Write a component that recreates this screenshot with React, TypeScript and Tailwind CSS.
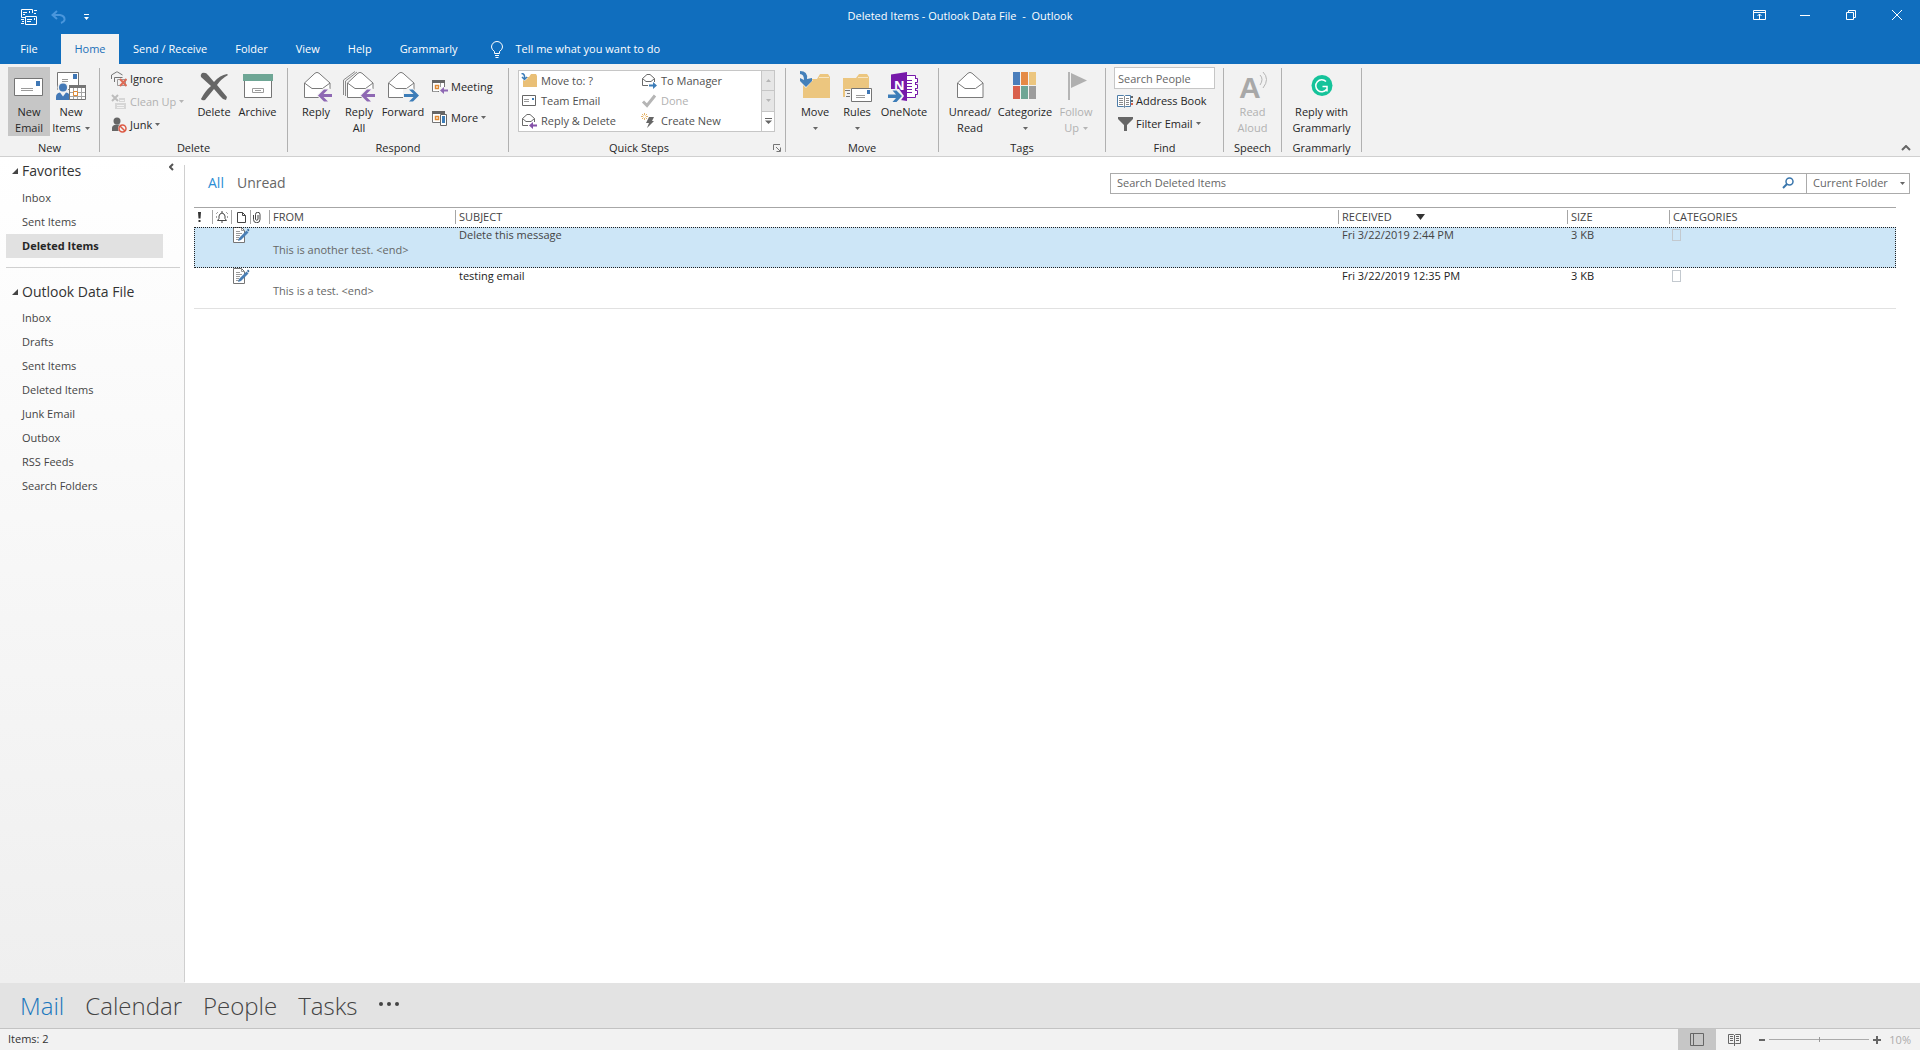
import React from 'react';

interface IconProps {
  className?: string;
}

interface Message {
  from: string;
  subject: string;
  preview: string;
  received: string;
  size: string;
  selected?: boolean;
}

const messages: Message[] = [
  {
    from: '',
    subject: 'Delete this message',
    preview: 'This is another test. <end>',
    received: 'Fri 3/22/2019 2:44 PM',
    size: '3 KB',
    selected: true,
  },
  {
    from: '',
    subject: 'testing email',
    preview: 'This is a test. <end>',
    received: 'Fri 3/22/2019 12:35 PM',
    size: '3 KB',
  },
];

const favorites = ['Inbox', 'Sent Items', 'Deleted Items'];
const folders = ['Inbox', 'Drafts', 'Sent Items', 'Deleted Items', 'Junk Email', 'Outbox', 'RSS Feeds', 'Search Folders'];
const tabs = ['Send / Receive', 'Folder', 'View', 'Help', 'Grammarly'];

/* ---------- Icons ---------- */

const Icon: React.FC<{ size: 16 | 32; children: React.ReactNode }> = ({ size, children }) => (
  <svg
    viewBox={size === 32 ? '0 0 32 32' : '0 0 16 16'}
    className={size === 32 ? 'w-8 h-8 shrink-0' : 'w-4 h-4 shrink-0'}
    fill="none"
    aria-hidden="true"
  >
    {children}
  </svg>
);

const OpenEnvelope = () => (
  <>
    <path d="M4.500 12 15 2.200q2-1.600 4 0L30 12v14.500H4.500z" fill="#fff" stroke="#7a7a7a" />
    <path d="M4.500 12 12 17.500h10.500L30 12" stroke="#7a7a7a" />
  </>
);

const SmallEnvelope = () => (
  <>
    <path d="M1.500 5.500 6 1.500h3l4.500 4V12.500h-12z" fill="#fff" stroke="#6a6a6a" />
    <path d="M1.500 5.500 5 8.500h5l3.500-3" stroke="#6a6a6a" />
  </>
);

const ArrowLeft = () => (
  <>
    <path d="M22 18h12v14H22z" fill="#f2f2f2" />
    <path d="M18 24.500 24 18.500h4l-4.500 4.500H33v3h-9.500L28 30.500h-4z" fill="#8e68b3" stroke="#f2f2f2" strokeWidth="2" paintOrder="stroke" />
  </>
);

const NewEmailIcon = () => (
  <Icon size={32}>
    <path d="M1.500 7.500h28v17h-28z" fill="#fff" stroke="#757575" />
    <path d="M23 10h4v5h-4z" fill="#3f77b5" />
    <path d="M8 17.500h12M8 19.500h12" stroke="#9b9b9b" />
  </Icon>
);

const NewItemsIcon = () => (
  <Icon size={32}>
    <path d="M2.500 1.500h21v17h-21z" fill="#fff" stroke="#757575" />
    <path d="M18 3h4v5h-4z" fill="#3f77b5" />
    <path d="M7 8.500h6M7 10.500h6" stroke="#9b9b9b" />
    <circle cx="8" cy="16.500" r="5.500" fill="#f2f2f2" />
    <circle cx="8" cy="16.500" r="4" fill="#4379b7" />
    <path d="M1 29v-3q0-4 4-4.500l3 4 3-4q4 .5 4 4.500v3z" fill="#4379b7" />
    <path d="M14.500 14.500h16v14h-16z" fill="#fff" stroke="#757575" />
    <path d="M14 14h17v3H14z" fill="#757575" />
    <path d="M18.500 17v11M26.500 17v11M15 21.500h15M15 25.500h15M22.500 17v11" stroke="#a5a5a5" />
    <path d="M18.500 20.500h4v4h-4z" fill="#fff" stroke="#e08a34" />
  </Icon>
);

const DeleteIcon = () => (
  <Icon size={32}>
    <path d="M4 2q4-1 6 2l6 7q6-7 13-8l1 1q-7 4-11 10l10 12-1 3q-4-1-6-4l-6-7-9 11q-3 1-4-1 4-8 10-13L3 6q-1-2 1-4z" fill="#666" />
  </Icon>
);

const ArchiveIcon = () => (
  <Icon size={32}>
    <path d="M2.500 9.500h27v17h-27z" fill="#fff" stroke="#757575" />
    <path d="M1 3h30v7H1z" fill="#6ea695" />
    <path d="M10.500 17.500h11v4h-11z" stroke="#9b9b9b" />
    <path d="M13 19.500h6" stroke="#9b9b9b" />
  </Icon>
);

const ReplyIcon = () => (
  <Icon size={32}>
    <OpenEnvelope />
    <ArrowLeft />
  </Icon>
);

const ReplyAllIcon = () => (
  <Icon size={32}>
    <path d="M.5 24V9L12 .5M2.500 25V10L14 1" stroke="#8a8a8a" />
    <OpenEnvelope />
    <ArrowLeft />
  </Icon>
);

const ForwardIcon = () => (
  <Icon size={32}>
    <g transform="translate(-3 0)">
      <OpenEnvelope />
    </g>
    <path d="M16 18h10v14H16z" fill="#f2f2f2" />
    <path d="M32 24.500 26 18.500h-4l4.500 4.500H17v3h9.500L22 30.500h4z" fill="#3d7db8" stroke="#f2f2f2" strokeWidth="2" paintOrder="stroke" />
  </Icon>
);

const MoveIcon = () => (
  <Icon size={32}>
    <path d="M4 8h14l3-5h8l2 3v21H4z" fill="#ecc67f" />
    <path d="M20 6.500h10" stroke="#f7e6c4" />
    <path d="M0 0h9v9h5L7 17 0 10z" fill="#f2f2f2" />
    <path d="M1 0q8 0 7 8l5-1v3l-6 6-6-6V7l4 2q0-6-4-6z" fill="#4480ba" />
  </Icon>
);

const RulesIcon = () => (
  <Icon size={32}>
    <path d="M2 7h13l3-4h8l2 3v20H2z" fill="#ecc67f" />
    <path d="M17 6.500h10" stroke="#f7e6c4" />
    <path d="M4 18h8v9H4z" fill="#f2f2f2" />
    <path d="M4 19.500h5M6 22.500h3M5 25.500h4" stroke="#757575" />
    <path d="M10.500 17.500h20v13h-20z" fill="#fff" stroke="#757575" />
    <path d="M26 19h3v4h-3z" fill="#3f77b5" />
    <path d="M15 24.500h9M15 26.500h9" stroke="#9b9b9b" />
  </Icon>
);

const OneNoteIcon = () => (
  <Icon size={32}>
    <path d="M17 4.500h10.500v22H17z" fill="#fff" stroke="#7719aa" />
    <path d="M27 7.500h2.500v4H27M27 13.500h2.500v4H27M27 19.500h2.500v4H27" fill="#fff" stroke="#7719aa" />
    <path d="M19 9.500h5M19 12.500h5M19 15.500h5M19 18.500h5M19 21.500h5" stroke="#7719aa" />
    <path d="M3 3.500 19 1v29L3 27.500z" fill="#7719aa" />
    <text x="6" y="19" fill="#fff" fontSize="13" fontWeight="700" fontFamily="Open Sans, sans-serif">N</text>
    <path d="M-1 18h12l5 7-5 7H-1z" fill="#f2f2f2" />
    <path d="M0 23.500h8l-3.500-4h4L14 25l-5.500 6h-4l3.500-4H0z" fill="#3d7db8" />
  </Icon>
);

const UnreadIcon = () => (
  <Icon size={32}>
    <g transform="translate(-1 0)">
      <OpenEnvelope />
    </g>
  </Icon>
);

const CategorizeIcon = () => (
  <Icon size={32}>
    <path d="M4 1h7v13H4z" fill="#4a7ebb" />
    <path d="M12 1h7v13h-7z" fill="#e58a45" />
    <path d="M20 1h7v13h-7z" fill="#ecc67f" />
    <path d="M4 15h7v13H4z" fill="#d9604c" />
    <path d="M12 15h7v13h-7z" fill="#6ea695" />
    <path d="M20 15h7v13h-7z" fill="#9c9c9c" />
  </Icon>
);

const FlagIcon = () => (
  <Icon size={32}>
    <path d="M8 1h2v28H8z" fill="#b5b5b5" />
    <path d="M11 2 27 9.500 11 17z" fill="#b0b0b0" />
  </Icon>
);

const ReadAloudIcon = () => (
  <Icon size={32}>
    <text x="2" y="27" fill="#a8a8a8" fontSize="30" fontWeight="700" fontFamily="Liberation Sans, sans-serif">A</text>
    <path d="M23 4q4 4 0 10M26 1q7 7 0 16" stroke="#b5b5b5" />
  </Icon>
);

const GrammarlyIcon = () => (
  <Icon size={32}>
    <circle cx="16" cy="14.500" r="10.500" fill="#15c39a" />
    <path d="M20 10.500A6 6 0 1 0 20.500 18.500M16.500 15.500h4.500v5" stroke="#fff" strokeWidth="1.500" />
  </Icon>
);

const IgnoreIcon = () => (
  <Icon size={16}>
    <path d="M.5 8V4l5-3h1l5 3M3.500 11V6.500h8M6.500 14V9" stroke="#757575" />
    <path d="M6.500 8.500h8v6h-8z" fill="#f2f2f2" stroke="#9b9b9b" />
    <path d="m9 8 6.500 7M15.500 8 9 15" stroke="#dd6a55" strokeWidth="2" />
  </Icon>
);

const CleanUpIcon = () => (
  <Icon size={16}>
    <path d="m1 1 6 6M7 1 1 7" stroke="#bdbdbd" strokeWidth="2" />
    <path d="M8 4h6v4H8zM4 9h11v6H4z" fill="#d6d6d6" />
    <path d="M6 11.500h7M6 13.500h7M9 6.500h4" stroke="#f2f2f2" />
  </Icon>
);

const JunkIcon = () => (
  <Icon size={16}>
    <circle cx="6" cy="4" r="3.500" fill="#666" />
    <path d="M1 14v-3q0-3 4-3.500h3q2 0 3 2L8 14z" fill="#666" />
    <circle cx="11.500" cy="11.500" r="4.500" fill="#f2f2f2" />
    <circle cx="11.500" cy="11.500" r="3.500" stroke="#dd5a45" strokeWidth="1.500" />
    <path d="m9 9 5 5" stroke="#dd5a45" strokeWidth="1.500" />
  </Icon>
);

const MeetingIcon = () => (
  <Icon size={16}>
    <path d="M.5 1.500h12v11H.5z" fill="#fff" stroke="#757575" />
    <path d="M0 1h13v3H0z" fill="#666" />
    <path d="M3.500 6.500h3v3h-3z" stroke="#e08a34" strokeWidth="1.500" />
    <path d="M8.500 4v4M1 12.500h5" stroke="#9b9b9b" />
    <path d="M7 8h9v7H7z" fill="#f2f2f2" />
    <path d="M8 11.500 12 8v2.500h4v2h-4V15z" fill="#8e68b3" />
  </Icon>
);

const MoreIcon = () => (
  <Icon size={16}>
    <path d="M.5 1.500h12v11H.5z" fill="#fff" stroke="#757575" />
    <path d="M0 1h13v3H0z" fill="#666" />
    <path d="M3.500 6.500h3v3h-3z" stroke="#e08a34" strokeWidth="1.500" />
    <path d="M8.500 4.500h6v11h-6z" fill="#fff" stroke="#666" />
    <path d="M10 6h3v7h-3z" fill="#3d7db8" />
  </Icon>
);

const FolderMoveIcon = () => (
  <Icon size={16}>
    <path d="M2 4h6l2-3h5l1 2v11H2z" fill="#e9bf76" />
    <path d="M0 0h5v5h2L3.500 8 0 5z" fill="#fff" />
    <path d="M.5.500q3.500 0 3 5M1 4l2.500 2.500L6 4" stroke="#3d7db8" strokeWidth="1.500" />
  </Icon>
);

const TeamEmailIcon = () => (
  <Icon size={16}>
    <path d="M1.500 2.500h13v10h-13z" fill="#fff" stroke="#666" />
    <path d="M3 6.500h5M3 8.500h5" stroke="#9b9b9b" />
    <path d="M11 5h2v2h-2z" fill="#3d7db8" />
  </Icon>
);

const ReplyDeleteIcon = () => (
  <Icon size={16}>
    <SmallEnvelope />
    <path d="M7 9h9v7H7z" fill="#fff" />
    <path d="M8 12.500 12 9v2.500h4v2h-4V16z" fill="#8451a8" />
  </Icon>
);

const ToManagerIcon = () => (
  <Icon size={16}>
    <SmallEnvelope />
    <path d="M7 9h9v7H7z" fill="#fff" />
    <path d="M16 12.500 12 9v2.500H8v2h4V16z" fill="#3d7db8" />
  </Icon>
);

const DoneIcon = () => (
  <Icon size={16}>
    <path d="m2 8.500 4 4L14 2.500" stroke="#b5b5b5" strokeWidth="3" />
  </Icon>
);

const CreateNewIcon = () => (
  <Icon size={16}>
    <path d="M3.500 0v7M0 3.500h7M1 1l5 5M6 1 1 6" stroke="#e6b368" />
    <circle cx="3.500" cy="3.500" r="1.500" fill="#fff" />
    <path d="M8 4h5l-2 4h2l-7 7 2-5H5z" fill="#666" />
  </Icon>
);

const AddressBookIcon = () => (
  <Icon size={16}>
    <path d="M.5 2.500h6l1 1 1-1h5v11h-5l-1 1-1-1h-6z" fill="#fff" stroke="#4d7da8" />
    <path d="M7.500 3v11M2 5.500h4M2 7.500h4M2 9.500h4M2 11.500h4M9 5.500h3M9 7.500h3M9 9.500h3M9 11.500h3" stroke="#8a8a8a" />
    <path d="M14 3h2v2h-2zM14 7h2v2h-2z" fill="#666" />
    <path d="M14 10h2v2h-2z" fill="#d9604c" />
  </Icon>
);

const FilterIcon = () => (
  <Icon size={16}>
    <path d="M1 1h15v2L10 9v6H7V9L1 3z" fill="#666" />
  </Icon>
);

const NoteIcon: React.FC<IconProps> = ({ className }) => (
  <svg viewBox="0 0 17 16" className={className} fill="none" aria-hidden="true">
    <path d="M.5.500h8l3 3v12H.5z" fill="#fff" stroke="#757575" />
    <path d="M8.500.500v3h3M3 4.500h4M3 6.500h6M3 8.500h4M3 10.500h3M3 12.500h3" stroke="#9b9b9b" />
    <path d="m6 11 7.500-7.500 2 2L8 13l-3 1z" fill="#4a7fb5" />
    <path d="m14 3 1-1.500 1.500 1.500-1 1.500z" fill="#3a6a9c" />
  </svg>
);

const Caret: React.FC<{ disabled?: boolean }> = ({ disabled }) => (
  <svg viewBox="0 0 5 3" className="w-[5px] h-[3px] shrink-0" aria-hidden="true">
    <path d="M0 0h5L2.500 3z" fill={disabled ? '#b5b5b5' : '#666'} />
  </svg>
);

/* ---------- Ribbon ---------- */

interface GroupProps {
  label: string;
  className?: string;
  launcher?: boolean;
  children: React.ReactNode;
}

const RibbonGroup: React.FC<GroupProps> = ({ label, className = '', launcher, children }) => (
  <section aria-label={label} className="flex shrink-0">
    <div className="flex flex-col pt-[3px]">
      <div className={`flex flex-1 items-start ${className}`}>{children}</div>
      <div className="flex h-4 items-center">
        <span className="flex-1 text-center leading-4">{label}</span>
        {launcher && (
          <button aria-label="Manage Quick Steps" className="w-4 h-3 flex items-center justify-center">
            <svg viewBox="0 0 8 8" className="w-2 h-2" fill="none">
              <path d="M.5 6V.5H7M3 3l4 4M7.500 3.500v4h-4" stroke="#757575" />
            </svg>
          </button>
        )}
      </div>
    </div>
    <div className="w-px h-[84px] mt-1 bg-[#b1b1b1]" />
  </section>
);

interface BigButtonProps {
  icon: React.ReactNode;
  lines: string[];
  className: string;
  caret?: boolean;
  active?: boolean;
  disabled?: boolean;
}

const BigButton: React.FC<BigButtonProps> = ({ icon, lines, className, caret, active, disabled }) => (
  <button
    disabled={disabled}
    className={`flex flex-col items-center h-[69px] pt-0.5 leading-4 whitespace-nowrap ${className} ${active ? 'bg-[#c6c6c6]' : 'hover:bg-[#d5d5d5]'} ${disabled ? 'text-[#b1b1b1]' : ''}`}
  >
    <span className="flex h-[35px] items-center">{icon}</span>
    <span>{lines[0]}</span>
    <span className="flex h-4 items-center gap-1">
      {lines[1]}
      {caret && <Caret disabled={disabled} />}
    </span>
  </button>
);

interface SmallButtonProps {
  icon: React.ReactNode;
  label: string;
  className?: string;
  caret?: boolean;
  disabled?: boolean;
}

const SmallButton: React.FC<SmallButtonProps> = ({ icon, label, className = '', caret, disabled }) => (
  <button
    disabled={disabled}
    className={`flex items-center gap-[3px] whitespace-nowrap ${className} ${disabled ? 'text-[#b1b1b1]' : 'hover:bg-[#d5d5d5]'}`}
  >
    {icon}
    <span>{label}</span>
    {caret && <Caret disabled={disabled} />}
  </button>
);

const QuickStep: React.FC<SmallButtonProps> = ({ icon, label, disabled }) => (
  <button
    disabled={disabled}
    className={`flex h-5 w-[120px] items-center gap-1 whitespace-nowrap ${disabled ? 'text-[#b1b1b1]' : 'text-[#505050] hover:bg-[#cde6f7]'}`}
  >
    {icon}
    <span>{label}</span>
  </button>
);

const Ribbon = () => (
  <div className="flex h-[93px] bg-[#f2f2f2] border-b border-[#d0d0d0] text-[#262626]">
    <RibbonGroup label="New" className="pl-2 pr-[7px]">
      <BigButton icon={<NewEmailIcon />} lines={['New', 'Email']} className="w-[42px]" active />
      <BigButton icon={<NewItemsIcon />} lines={['New', 'Items']} className="w-[42px]" caret />
    </RibbonGroup>

    <RibbonGroup label="Delete" className="pl-[11px] pr-2">
      <div className="flex w-[81px] flex-col items-start">
        <SmallButton icon={<IgnoreIcon />} label="Ignore" className="h-[23px]" />
        <SmallButton icon={<CleanUpIcon />} label="Clean Up" className="h-[23px]" caret disabled />
        <SmallButton icon={<JunkIcon />} label="Junk" className="h-[23px]" caret />
      </div>
      <BigButton icon={<DeleteIcon />} lines={['Delete']} className="w-11" />
      <BigButton icon={<ArchiveIcon />} lines={['Archive']} className="w-[43px]" />
    </RibbonGroup>

    <RibbonGroup label="Respond" className="pl-[6px] pr-[10px]">
      <BigButton icon={<ReplyIcon />} lines={['Reply']} className="w-11" />
      <BigButton icon={<ReplyAllIcon />} lines={['Reply', 'All']} className="w-[42px]" />
      <BigButton icon={<ForwardIcon />} lines={['Forward']} className="w-[46px]" />
      <div className="flex w-[72px] flex-col items-start pt-1 pl-[6px]">
        <SmallButton icon={<MeetingIcon />} label="Meeting" className="h-[31px]" />
        <SmallButton icon={<MoreIcon />} label="More" className="h-[31px]" caret />
      </div>
    </RibbonGroup>

    <RibbonGroup label="Quick Steps" className="pt-[3px] pl-[9px] pr-[10px]" launcher>
      <div className="flex bg-white border border-[#c6c6c6]">
        <div className="grid grid-cols-2 pl-[2px]">
          <QuickStep icon={<FolderMoveIcon />} label="Move to: ?" />
          <QuickStep icon={<ToManagerIcon />} label="To Manager" />
          <QuickStep icon={<TeamEmailIcon />} label="Team Email" />
          <QuickStep icon={<DoneIcon />} label="Done" disabled />
          <QuickStep icon={<ReplyDeleteIcon />} label="Reply & Delete" />
          <QuickStep icon={<CreateNewIcon />} label="Create New" />
        </div>
        <div className="flex w-[13px] flex-col border-l border-[#c6c6c6]">
          <button aria-label="Row up" disabled className="flex flex-1 items-center justify-center bg-[#e6e6e6]">
            <svg viewBox="0 0 5 3" className="w-[5px] h-[3px]"><path d="M0 3h5L2.500 0z" fill="#b5b5b5" /></svg>
          </button>
          <button aria-label="Row down" disabled className="flex flex-1 items-center justify-center bg-[#e6e6e6] border-y border-[#c6c6c6]">
            <Caret disabled />
          </button>
          <button aria-label="More quick steps" className="flex flex-1 items-center justify-center">
            <svg viewBox="0 0 7 6" className="w-[7px] h-[6px]"><path d="M0 0h7v1H0zM0 2.500h7L3.500 6z" fill="#666" /></svg>
          </button>
        </div>
      </div>
    </RibbonGroup>

    <RibbonGroup label="Move" className="pl-[7px] pr-[7px]">
      <BigButton icon={<MoveIcon />} lines={['Move']} className="w-11" caret />
      <BigButton icon={<RulesIcon />} lines={['Rules']} className="w-10" caret />
      <BigButton icon={<OneNoteIcon />} lines={['OneNote']} className="w-[54px]" />
    </RibbonGroup>

    <RibbonGroup label="Tags" className="pl-[7px] pr-[9px]">
      <BigButton icon={<UnreadIcon />} lines={['Unread/', 'Read']} className="w-12" />
      <BigButton icon={<CategorizeIcon />} lines={['Categorize']} className="w-[62px]" caret />
      <BigButton icon={<FlagIcon />} lines={['Follow', 'Up']} className="w-10" caret disabled />
    </RibbonGroup>

    <RibbonGroup label="Find" className="pl-2 pr-2">
      <div className="flex w-[101px] flex-col items-start">
        <input
          type="text"
          aria-label="Search People"
          placeholder="Search People"
          className="w-full h-[22px] px-[3px] bg-white border border-[#c6c6c6] placeholder:text-[#666] outline-none"
        />
        <SmallButton icon={<AddressBookIcon />} label="Address Book" className="h-[23px] pl-[3px]" />
        <SmallButton icon={<FilterIcon />} label="Filter Email" className="h-[23px] pl-[3px]" caret />
      </div>
    </RibbonGroup>

    <RibbonGroup label="Speech" className="pl-2 pr-2">
      <BigButton icon={<ReadAloudIcon />} lines={['Read', 'Aloud']} className="w-[41px]" disabled />
    </RibbonGroup>

    <RibbonGroup label="Grammarly" className="pl-2 pr-2">
      <BigButton icon={<GrammarlyIcon />} lines={['Reply with', 'Grammarly']} className="w-[63px]" />
    </RibbonGroup>

    <button aria-label="Collapse the Ribbon" className="ml-auto mr-[9px] mb-[3px] self-end w-[10px] h-[10px] flex items-center justify-center">
      <svg viewBox="0 0 10 6" className="w-[10px] h-[6px]" fill="none">
        <path d="m1 5 4-4 4 4" stroke="#666" strokeWidth="2" />
      </svg>
    </button>
  </div>
);

/* ---------- Title bar ---------- */

const TitleBar = () => (
  <div className="grid grid-cols-[1fr_auto_1fr] h-[34px] text-white">
    <div className="flex items-center pl-[21px]">
      <button aria-label="Send/Receive All Folders">
        <svg viewBox="0 0 16 16" className="w-4 h-4" fill="none" stroke="#fff">
          <path d="M4 8.500H.5v-8h11V4M2 3.500h4M2 5.500h2M8.500 2v2" />
          <path d="M4.500 7.500h11v8h-11zM6 10.500h5M6 12.500h4M13.500 9v2M13 1.500h3M13 4.500h2M0 10.500h3M1 12.500h2M0 14.500h3" />
        </svg>
      </button>
      <button aria-label="Undo" className="ml-[14px]" disabled>
        <svg viewBox="0 0 15 14" className="w-[15px] h-[14px]" fill="none" stroke="#4a96dc" strokeWidth="2">
          <path d="M6 1 1.500 5 6 9M2 5h7q5 1 4.500 5-.5 2-3.500 3" />
        </svg>
      </button>
      <button aria-label="Customize Quick Access Toolbar" className="ml-[18px]">
        <svg viewBox="0 0 5 6" className="w-[5px] h-[6px]">
          <path d="M0 0h5v1H0zM0 3h5L2.500 6z" fill="#fff" />
        </svg>
      </button>
    </div>
    <h1 className="self-center pb-0.5 whitespace-pre">Deleted Items - Outlook Data File  -  Outlook</h1>
    <div className="flex justify-end pb-1">
      <button aria-label="Ribbon Display Options" className="flex w-[46px] items-center justify-center">
        <svg viewBox="0 0 13 10" className="w-[13px] h-[10px]" fill="none" stroke="#fff">
          <path d="M.5.500h12v9H.5zM.5 2.500h12M6.500 9V4M4.500 6l2-2 2 2" />
        </svg>
      </button>
      <button aria-label="Minimize" className="flex w-[46px] items-center justify-center">
        <span className="w-[10px] h-px bg-white" />
      </button>
      <button aria-label="Restore Down" className="flex w-[46px] items-center justify-center">
        <svg viewBox="0 0 10 10" className="w-[10px] h-[10px]" fill="none" stroke="#fff">
          <path d="M.5 2.500h7v7h-7zM2.500 2V.5h7v7H8" />
        </svg>
      </button>
      <button aria-label="Close" className="flex w-[46px] items-center justify-center">
        <svg viewBox="0 0 10 10" className="w-[10px] h-[10px]" fill="none" stroke="#fff">
          <path d="m0 0 10 10M10 0 0 10" />
        </svg>
      </button>
    </div>
  </div>
);

const TabStrip = () => (
  <nav className="flex h-[30px] text-white">
    <button className="w-[61px] pr-[3px]">File</button>
    <button className="w-[58px] bg-[#f2f2f2] text-[#1a6fb8]">Home</button>
    {tabs.map(tab => (
      <button key={tab} className="px-[14px] whitespace-nowrap">{tab}</button>
    ))}
    <button className="flex items-center gap-[13px] ml-[19px]">
      <svg viewBox="0 0 12 17" className="w-3 h-[17px]" fill="none" stroke="#fff">
        <path d="M3.500 12.500v-2Q.5 8.500.5 6a5.500 5.500 0 0 1 11 0q0 2.500-3 4.500v2zM4 14.500h4M4.500 16.500h3" />
      </svg>
      Tell me what you want to do
    </button>
  </nav>
);

/* ---------- Folder pane ---------- */

const FolderHeading: React.FC<{ label: string; className: string }> = ({ label, className }) => (
  <h2 className={`flex items-center gap-1 pl-3 pb-0.5 text-sm text-[#333] whitespace-nowrap ${className}`}>
    <svg viewBox="0 0 6 6" className="w-[6px] h-[6px]"><path d="M6 0v6H0z" fill="#444" /></svg>
    {label}
  </h2>
);

const FolderLink: React.FC<{ label: string; active?: boolean }> = ({ label, active }) => (
  <a
    href="#"
    className={`flex h-6 items-center ml-[6px] mr-[21px] pl-4 ${active ? 'bg-[#e1e1e1] font-bold text-[#262626]' : 'text-[#444] hover:bg-[#eaeaea]'}`}
  >
    {label}
  </a>
);

const FolderPane = () => (
  <aside className="flex w-[185px] shrink-0 pb-px bg-linear-to-b from-white to-[#efefef]">
    <div className="relative flex-1">
      <FolderHeading label="Favorites" className="h-[29px]" />
      <button aria-label="Minimize the Folder Pane" className="absolute right-[10px] top-[6px]">
        <svg viewBox="0 0 5 8" className="w-[5px] h-2" fill="none"><path d="M4 1 1 4l3 3" stroke="#555" strokeWidth="2" /></svg>
      </button>
      {favorites.map(label => (
        <FolderLink key={label} label={label} active={label === 'Deleted Items'} />
      ))}
      <hr className="mt-[9px] mb-3 ml-[6px] mr-1 border-[#d0d0d0]" />
      <FolderHeading label="Outlook Data File" className="h-[26px]" />
      {folders.map(label => (
        <FolderLink key={label} label={label} />
      ))}
    </div>
    <div className="w-px mt-2 bg-[#cfcfcf]" />
  </aside>
);

/* ---------- Message list ---------- */

const HeaderCell: React.FC<{ label: string; first?: boolean; children?: React.ReactNode }> = ({ label, first, children }) => (
  <th scope="col" aria-label={label} className="h-[19px] p-0 font-normal">
    <div className={`flex h-[14px] items-center ${first ? '' : 'border-l border-[#a6a6a6]'}`}>{children}</div>
  </th>
);

const MessageTable = () => (
  <table className="w-full table-fixed border-collapse text-left">
    <colgroup>
      <col className="w-[18px]" />
      <col className="w-[19px]" />
      <col className="w-[19px]" />
      <col className="w-[19px]" />
      <col className="w-[186px]" />
      <col />
      <col className="w-[229px]" />
      <col className="w-[102px]" />
      <col className="w-[227px]" />
    </colgroup>
    <thead className="border-t border-[#a6a6a6] text-[#444]">
      <tr>
        <HeaderCell label="Importance" first>
          <svg viewBox="0 0 3 10" className="w-[3px] h-[10px] ml-1"><path d="M0 0h3l-.5 6.500h-2zM.5 8h2v2h-2z" fill="#333" /></svg>
        </HeaderCell>
        <HeaderCell label="Reminder">
          <svg viewBox="0 0 12 12" className="w-3 h-3 ml-[3px]" fill="none" stroke="#444">
            <path d="M1.500 9.500 3 7.500V5q.5-2.500 3-3 2.500.5 3 3v2.500l1.500 2zM5 11h2M6 0v2M.5 2.500l1-1M11.500 2.500l-1-1M0 6h1M11 6h1" />
          </svg>
        </HeaderCell>
        <HeaderCell label="Icon">
          <svg viewBox="0 0 9 11" className="w-[9px] h-[11px] ml-[5px]" fill="none" stroke="#444">
            <path d="M.5.500h5l3 3v7h-8zM5.500.500v3h3" />
          </svg>
        </HeaderCell>
        <HeaderCell label="Attachment">
          <svg viewBox="0 0 8 11" className="w-2 h-[11px] ml-[2px]" fill="none" stroke="#444">
            <path d="M.5 3v4.500a3 3 0 0 0 6.500 0V2.500a2 2 0 0 0-4.500 0v5q1.200 1.500 2.500 0V3" />
          </svg>
        </HeaderCell>
        <HeaderCell label="From"><span className="pl-[3px]">FROM</span></HeaderCell>
        <HeaderCell label="Subject"><span className="pl-[3px]">SUBJECT</span></HeaderCell>
        <HeaderCell label="Received">
          <span className="pl-[3px]">RECEIVED</span>
          <svg viewBox="0 0 9 6" className="w-[9px] h-[6px] ml-6"><path d="M0 0h9L4.500 6z" fill="#333" /></svg>
        </HeaderCell>
        <HeaderCell label="Size"><span className="pl-[3px]">SIZE</span></HeaderCell>
        <HeaderCell label="Categories"><span className="pl-[3px]">CATEGORIES</span></HeaderCell>
      </tr>
    </thead>
    <tbody>
      {messages.map(message => (
        <tr
          key={message.subject}
          className={`h-[41px] align-top leading-[15px] ${message.selected ? 'bg-[#cde6f7] text-[#444] outline-1 outline-dotted outline-[#222] -outline-offset-1' : 'text-[#222] border-b border-[#e1e1e1]'}`}
        >
          <td className="p-0" />
          <td className="p-0" />
          <td className="p-0 pl-[2px]"><NoteIcon className="w-[17px] h-4 max-w-none" /></td>
          <td className="p-0" />
          <td className="p-0 pl-1 whitespace-nowrap">
            <div className="h-[15px]">{message.from}</div>
            <div className="text-[#666]">{message.preview}</div>
          </td>
          <td className="p-0 pl-1">{message.subject}</td>
          <td className="p-0 pl-1">{message.received}</td>
          <td className="p-0 pl-1">{message.size}</td>
          <td className="p-0 pt-[2px] pl-[3px]">
            <div className="w-[9px] h-3 border border-[#c3c9cf]" />
          </td>
        </tr>
      ))}
    </tbody>
  </table>
);

const MessageList = () => (
  <main className="flex-1 min-w-0 bg-white">
    <div className="flex h-[50px] items-center pt-0.5 pl-[23px] pr-[10px]">
      <button className="text-sm text-[#2a8dd4]">All</button>
      <button className="ml-[13px] text-sm text-[#666]">Unread</button>
      <div className="flex ml-auto w-[800px] h-[21px] border border-[#ababab] text-[#666]">
        <input
          type="search"
          aria-label="Search Deleted Items"
          placeholder="Search Deleted Items"
          className="flex-1 min-w-0 px-[6px] placeholder:text-[#666] outline-none"
        />
        <button aria-label="Search" className="px-3">
          <svg viewBox="0 0 12 12" className="w-3 h-3" fill="none" stroke="#3a76ac">
            <circle cx="7.500" cy="4.500" r="3.500" strokeWidth="1.500" />
            <path d="M5 7 1 11" strokeWidth="2" />
          </svg>
        </button>
        <div className="relative w-[103px] border-l border-[#ababab]">
          <select aria-label="Search scope" className="w-full h-full pl-[6px] appearance-none outline-none">
            <option>Current Folder</option>
          </select>
          <span className="absolute right-1 top-2 pointer-events-none flex"><Caret /></span>
        </div>
      </div>
    </div>
    <div className="pl-[9px] pr-6">
      <MessageTable />
    </div>
  </main>
);

/* ---------- Bottom bars ---------- */

const ModuleNav = () => (
  <nav className="flex h-[45px] items-center gap-[21px] pl-5 bg-[#e3e3e3] text-2xl font-light text-[#444]">
    <a href="#" className="text-[#1a77bd]">Mail</a>
    <a href="#">Calendar</a>
    <a href="#">People</a>
    <a href="#">Tasks</a>
    <button aria-label="More options" className="flex gap-1 pb-1">
      <span className="w-1 h-1 rounded-full bg-[#444]" />
      <span className="w-1 h-1 rounded-full bg-[#444]" />
      <span className="w-1 h-1 rounded-full bg-[#444]" />
    </button>
  </nav>
);

const StatusBar = () => (
  <footer className="flex h-[22px] items-center pl-2 pr-[9px] bg-[#f2f2f2] border-t border-[#c3c3c3] text-[#333]">
    <span className="pb-0.5">Items: 2</span>
    <button aria-label="Normal view" className="flex ml-auto w-[38px] h-full items-center justify-center bg-[#c6c6c6]">
      <svg viewBox="0 0 14 13" className="w-[14px] h-[13px]" fill="none" stroke="#666">
        <path d="M.5.500h13v12H.5zM3.500 1v11" />
      </svg>
    </button>
    <button aria-label="Reading view" className="ml-3">
      <svg viewBox="0 0 13 13" className="w-[13px] h-[13px]" fill="none" stroke="#666">
        <path d="M.5 1.500h5l1 1 1-1h5v9h-5l-1 1-1-1h-5zM6.500 2v11M2 3.500h3M2 5.500h3M2 7.500h3M8 3.500h3M8 5.500h3M8 7.500h3" />
      </svg>
    </button>
    <button aria-label="Zoom out" className="ml-[18px]"><span className="block w-[6px] h-[2px] bg-[#666]" /></button>
    <input
      type="range"
      aria-label="Zoom"
      defaultValue={50}
      className="ml-1 w-[100px] h-px appearance-none bg-[#ababab] [&::-webkit-slider-thumb]:appearance-none [&::-webkit-slider-thumb]:w-px [&::-webkit-slider-thumb]:h-[5px] [&::-webkit-slider-thumb]:bg-[#999]"
    />
    <button aria-label="Zoom in" className="ml-1">
      <svg viewBox="0 0 8 8" className="w-2 h-2"><path d="M3 0h2v3h3v2H5v3H3V5H0V3h3z" fill="#666" /></svg>
    </button>
    <span className="ml-2 text-[#ababab]">10%</span>
  </footer>
);

const App = () => (
  <div className="flex min-h-screen flex-col bg-white font-['Open_Sans','Noto_Sans',sans-serif] text-[11px] leading-4">
    <header className="bg-[#106ebe]">
      <TitleBar />
      <TabStrip />
      <Ribbon />
    </header>
    <div className="flex flex-1">
      <FolderPane />
      <MessageList />
    </div>
    <ModuleNav />
    <StatusBar />
  </div>
);

export default App;
